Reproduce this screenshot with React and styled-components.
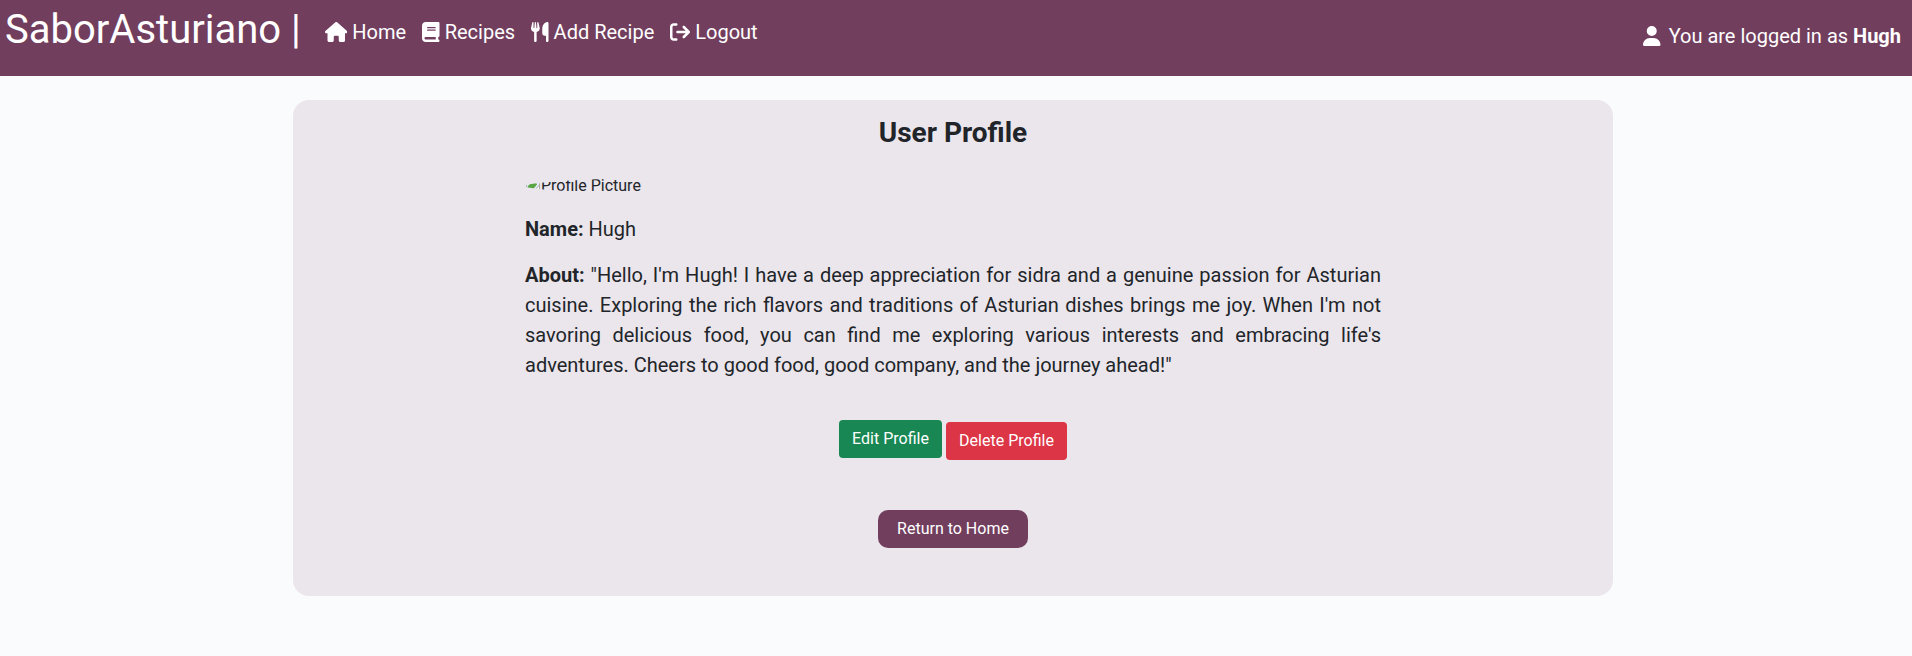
import React from 'react';
import styled, { createGlobalStyle } from 'styled-components';
import { FaHouse, FaBook, FaUtensils, FaArrowRightFromBracket, FaUser } from 'react-icons/fa6';

const GlobalStyle = createGlobalStyle`
  *, *::before, *::after { box-sizing: border-box; }
  body {
    margin: 0;
    background: #f9fbfd;
    color: #212529;
    font: 400 16px/1.5 Roboto, sans-serif;
  }
`;

const Header = styled.header`
  display: flex;
  align-items: flex-start;
  height: 76px;
  padding-left: 5px;
  padding-right: 11px;
  background: #723e5e;
  color: #fff;
  font-size: 20px;
`;

const Icon = styled.span`
  display: flex;
  flex: none;
  width: ${(p) => p.$width}px;
  height: 20px;

  svg {
    width: 100%;
    height: 100%;
  }
`;

const Brand = styled.a`
  font-size: 40px;
  line-height: 60px;
  white-space: pre;
`;

const Nav = styled.nav`
  display: flex;
  gap: 16px;
  margin: 17px 0 0 24px;
`;

const NavLink = styled.a`
  display: flex;
  align-items: center;
  gap: 5px;
  line-height: 30px;
  white-space: nowrap;
`;

const Status = styled.div`
  display: flex;
  align-items: center;
  gap: 8px;
  margin: 21px 0 0 auto;
  line-height: 30px;
  white-space: pre;
`;

const Card = styled.main`
  width: 1320px;
  height: 496px;
  margin: 24px 0 0 293px;
  padding: 13px 0 0;
  border-radius: 16px;
  background: #ebe6ec;
`;

const Title = styled.h1`
  margin: 0;
  font-size: 28px;
  line-height: 40px;
  font-weight: 700;
  text-align: center;
`;

const Details = styled.section`
  width: 856px;
  margin: 21px auto 0;
  font-size: 20px;
  line-height: 30px;
`;

const Avatar = styled.div`
  display: flex;
  align-items: center;
  height: 24px;
  border-radius: 50%;
  overflow: hidden;
  font-size: 16px;
  line-height: 24px;
`;

const Field = styled.p`
  margin: 16px 0 0;
  text-align: justify;
`;

const Actions = styled.div`
  display: flex;
  justify-content: center;
  align-items: flex-start;
  gap: 4px;
  margin-top: 40px;
`;

const Button = styled.button`
  width: ${(p) => p.$width}px;
  height: 38px;
  margin: ${(p) => p.$drop || 0}px 0 0;
  padding: 0;
  border: 0;
  border-radius: ${(p) => p.$radius || 4}px;
  background: ${(p) => p.$color};
  color: #fff;
  font: 400 16px/24px Roboto, sans-serif;
`;

const Footer = styled.div`
  display: flex;
  justify-content: center;
  margin-top: 50px;
`;

const BrokenImage = () => (
  <svg width="16" height="16" viewBox="0 0 16 16" aria-hidden="true">
    <path d="M1.5 1.5h9l4 4v9h-13z" fill="#e3ebf7" stroke="#b3b3b3" />
    <path d="M2.5 9c1.5-3 4-4.5 6.5-4.5 2 0 3 1 3 2l-5 6H2.5z" fill="#5aa542" />
    <path d="M8.5 13.5l6-6.5v7z" fill="#fff" stroke="#a6a6a6" />
  </svg>
);

export default function App() {
  return (
    <>
      <GlobalStyle />
      <Header>
        <Brand>SaborAsturiano |</Brand>
        <Nav>
          <NavLink><Icon $width={22.5}><FaHouse /></Icon>Home</NavLink>
          <NavLink><Icon $width={17.5}><FaBook /></Icon>Recipes</NavLink>
          <NavLink><Icon $width={17.5}><FaUtensils /></Icon>Add Recipe</NavLink>
          <NavLink><Icon $width={20}><FaArrowRightFromBracket /></Icon>Logout</NavLink>
        </Nav>
        <Status>
          <Icon $width={17.5}><FaUser /></Icon>
          <span>You are logged in as <b>Hugh</b></span>
        </Status>
      </Header>
      <Card>
        <Title>User Profile</Title>
        <Details>
          <Avatar><BrokenImage />Profile Picture</Avatar>
          <Field><b>Name:</b> Hugh</Field>
          <Field>
            <b>About:</b> "Hello, I'm Hugh! I have a deep appreciation for sidra and a genuine passion for
            Asturian cuisine. Exploring the rich flavors and traditions of Asturian dishes brings me joy.
            When I'm not savoring delicious food, you can find me exploring various interests and embracing
            life's adventures. Cheers to good food, good company, and the journey ahead!"
          </Field>
        </Details>
        <Actions>
          <Button $width={103} $color="#198754">Edit Profile</Button>
          <Button $width={121} $color="#dc3545" $drop={2}>Delete Profile</Button>
        </Actions>
        <Footer>
          <Button $width={150} $color="#723e5e" $radius={10}>Return to Home</Button>
        </Footer>
      </Card>
    </>
  );
}
